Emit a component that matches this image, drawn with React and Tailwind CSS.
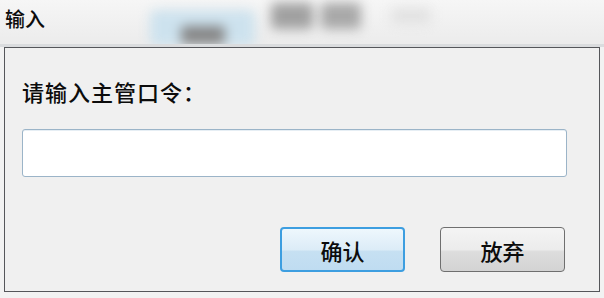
import React from "react";

const font = { fontFamily: '"Noto Sans CJK SC", "Noto Sans", sans-serif' };

export default function App() {
  return (
    <div className="w-[604px] h-[298px] bg-[#f2f2f2] overflow-hidden flex flex-col text-[#0c0c0c]" style={font}>
      {/* title area with blurred background */}
      <div className="relative h-[47px] bg-[linear-gradient(180deg,#f6f6f6,#ebebeb)] flex items-start overflow-hidden">
        <div className="absolute inset-0 flex items-center pointer-events-none blur-[6px]">
          <div className="ml-[150px] mt-[8px] w-[105px] h-[36px] rounded-md bg-[#cde2ee] flex items-end justify-center">
            <div className="w-[44px] h-[18px] mb-[2px] bg-[#858585] rounded" />
          </div>
          <div className="ml-[16px] -mt-[16px] w-[42px] h-[26px] bg-[#a0a0a0] rounded" />
          <div className="ml-[8px] -mt-[16px] w-[40px] h-[26px] bg-[#a8a8a8] rounded" />
          <div className="ml-[30px] -mt-[16px] w-[40px] h-[16px] bg-[#e2e2e2] rounded" />
        </div>
        <span className="relative ml-[5px] mt-[7px] text-[20px] leading-[24px] font-medium">输入</span>
        <div className="absolute left-0 right-0 bottom-0 h-[3px] bg-[#dadcde]" />
      </div>
      {/* dialog frame */}
      <div className="mx-[4px] h-[245px] border-[1.5px] border-[#55565a] bg-[#f0f0f0] flex flex-col">
        <div className="mt-[30px] ml-[17px] text-[22px] leading-[27px] font-medium tracking-[1px]">请输入主管口令：</div>
        <div className="mt-[24px] ml-[17px] w-[545px] h-[48px] rounded-[3px] border border-[#9bb4c8] bg-white shadow-[inset_0_1px_0_#e6eef4]" />
        <div className="mt-[50px] flex">
          <div className="ml-[275px] w-[125px] h-[45px] rounded-[4px] border-2 border-[#3d9ee0] bg-[linear-gradient(180deg,#eef7fd_0%,#dcecf7_50%,#c6e0f2_55%,#bfdcf1_100%)] flex items-center justify-center text-[22px] leading-none font-medium">
            确认
          </div>
          <div className="ml-[35px] w-[125px] h-[45px] rounded-[4px] border border-[#6f6f6f] bg-[linear-gradient(180deg,#f4f4f4_0%,#ececec_50%,#dddddd_55%,#d3d3d3_100%)] flex items-center justify-center text-[22px] leading-none font-medium">
            放弃
          </div>
        </div>
      </div>
    </div>
  );
}
